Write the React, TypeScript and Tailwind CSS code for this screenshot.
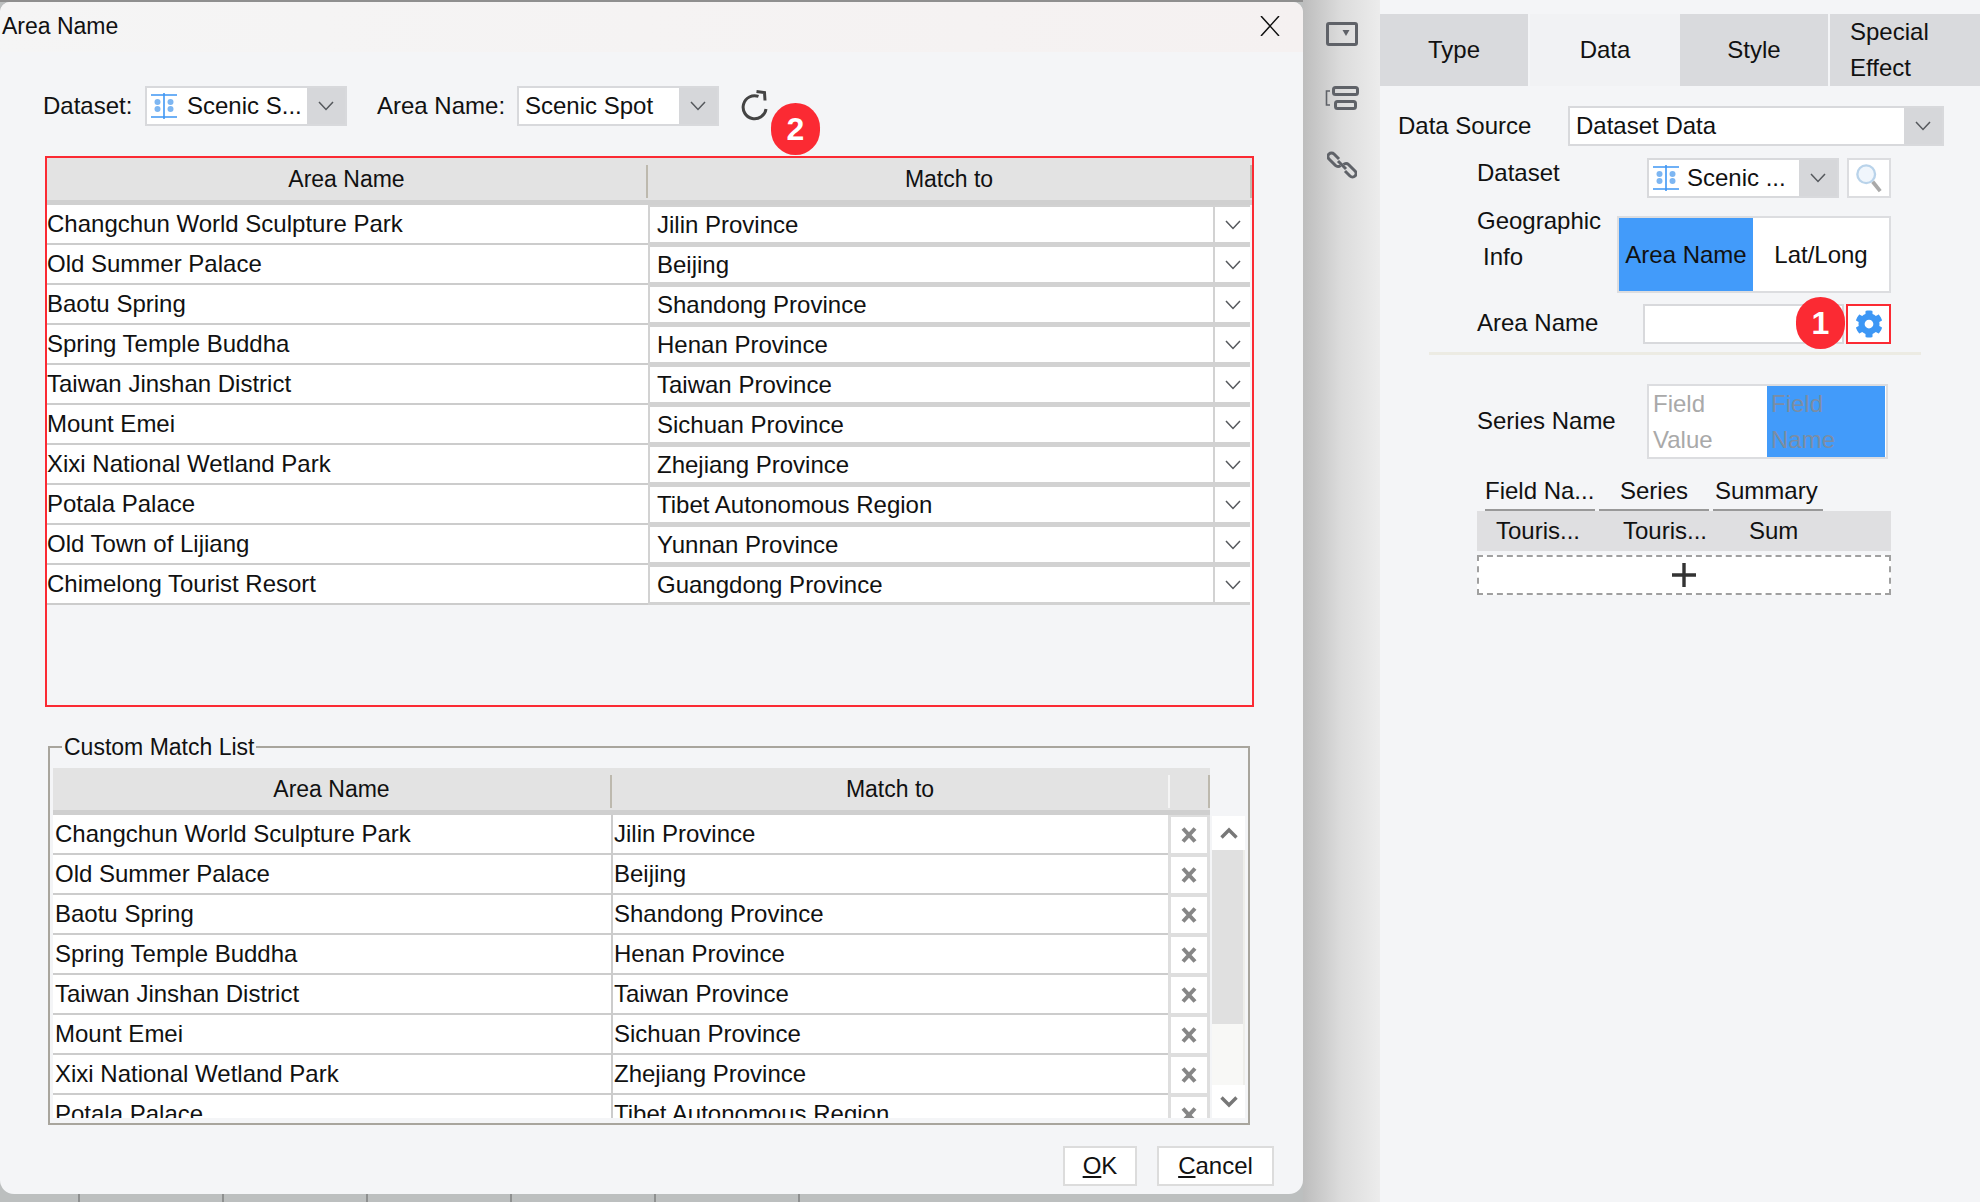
import { FaCog } from "react-icons/fa"

const autoRows = [
  ["Changchun World Sculpture Park", "Jilin Province"],
  ["Old Summer Palace", "Beijing"],
  ["Baotu Spring", "Shandong Province"],
  ["Spring Temple Buddha", "Henan Province"],
  ["Taiwan Jinshan District", "Taiwan Province"],
  ["Mount Emei", "Sichuan Province"],
  ["Xixi National Wetland Park", "Zhejiang Province"],
  ["Potala Palace", "Tibet Autonomous Region"],
  ["Old Town of Lijiang", "Yunnan Province"],
  ["Chimelong Tourist Resort", "Guangdong Province"],
]

const customRows = autoRows.slice(0, 8)

function Chevron({ className = "" }: { className?: string }) {
  return (
    <svg viewBox="0 0 16 10" className={`w-[16px] h-[10px] ${className}`} fill="none" stroke="#55585c" strokeWidth="1.5">
      <path d="M1 1l7 7.5L15 1" />
    </svg>
  )
}

function DatasetIcon() {
  return (
    <svg viewBox="0 0 26 26" className="w-[26px] h-[26px] shrink-0">
      <path d="M0 2h26M0 24h26M13 0v26" stroke="#3f97f4" strokeWidth="1.6" />
      <circle cx="6.5" cy="9" r="3" fill="#7db6f2" />
      <circle cx="6.5" cy="16" r="3" fill="#7db6f2" />
      <circle cx="19.5" cy="9" r="3" fill="#7db6f2" />
      <circle cx="19.5" cy="16" r="3" fill="#7db6f2" />
    </svg>
  )
}

function Badge({ n, className }: { n: number; className: string }) {
  return (
    <div className={`absolute w-[49px] h-[52px] rounded-full bg-[#fb2a33] text-white flex items-center justify-center text-[32px] font-bold ${className}`}>
      {n}
    </div>
  )
}

function Combo({ w, arrow = 40, h = 40, children }: { w: number; arrow?: number; h?: number; children: React.ReactNode }) {
  return (
    <div style={{ width: w, height: h }} className="flex shrink-0 bg-[#d6d7da] border-2 border-[#d8d9dc]">
      <div className="flex-1 min-w-0 bg-white flex items-center whitespace-nowrap overflow-hidden">{children}</div>
      <div style={{ width: arrow - 2 }} className="flex items-center justify-center">
        <Chevron />
      </div>
    </div>
  )
}

function XMark() {
  return (
    <svg viewBox="0 0 16 16" className="w-[16px] h-[16px]" stroke="#868686" strokeWidth="4">
      <path d="M2 1.5l12 13M14 1.5L2 14.5" />
    </svg>
  )
}

function ScrollArrow({ up }: { up?: boolean }) {
  return (
    <svg viewBox="0 0 18 12" className="w-[18px] h-[12px]" fill="none" stroke="#777777" strokeWidth="3.4">
      <path d={up ? "M1.5 10.5L9 3l7.5 7.5" : "M1.5 1.5L9 9l7.5-7.5"} />
    </svg>
  )
}

function Dialog() {
  return (
    <div className="relative h-[1192px] flex flex-col bg-[#f4f5f7] rounded-t-[10px] rounded-b-[14px] overflow-hidden">
      <div className="h-[50px] shrink-0 flex items-center justify-between bg-gradient-to-r from-[#f5f5f5] to-[#f5f1f1] pl-[2px] pr-[23px]">
        <span className="text-[23px] -mt-[2px]">Area Name</span>
        <svg viewBox="0 0 20 20" className="w-[20px] h-[20px] -mt-[3px]" stroke="#111111" strokeWidth="1.5">
          <path d="M1 0l18 20M19 0L1 20" />
        </svg>
      </div>

      <div className="h-[40px] mt-[34px] ml-[43px] flex items-center shrink-0">
        <span className="w-[102px]">Dataset:</span>
        <Combo w={202}>
          <span className="ml-[4px] mr-[10px]"><DatasetIcon /></span>
          Scenic S...
        </Combo>
        <span className="ml-[30px] w-[140px]">Area Name:</span>
        <Combo w={202}>
          <span className="ml-[6px]">Scenic Spot</span>
        </Combo>
        <svg viewBox="0 0 28 32" className="w-[28px] h-[32px] ml-[22px]" fill="none" stroke="#444444" strokeWidth="3">
          <path d="M25 19a11.5 11.5 0 1 1-7.5-12.6" />
          <path d="M15.5 1.5l8 1 .5 8" />
        </svg>
      </div>

      <div className="ml-[45px] mt-[30px] w-[1209px] h-[551px] shrink-0 border-2 border-[#fb2a33]">
        <div className="h-[47px] flex bg-[#e3e3e3] border-b-[5px] border-[#d0d0d0]">
          <div className="w-[600px] flex items-center justify-center text-[23px]">Area Name</div>
          <div className="w-[2px] h-[33px] mt-[7px] bg-[#bdb9ae]" />
          <div className="w-[603px] flex items-center justify-center text-[23px]">Match to</div>
          <div className="w-[2px] h-[33px] mt-[7px] bg-[#bdb9ae]" />
        </div>
        {autoRows.map(([area, match]) => (
          <div key={area} className="flex h-[40px] w-[1203px]">
            <div className="w-[601px] shrink-0 bg-white border-b-2 border-[#cccccc] flex items-center whitespace-nowrap">{area}</div>
            <div className="flex-1 flex bg-[#d2d2d2] pt-[2px] pb-[3px] pl-[2px]">
              <div className="w-[563px] bg-white pl-[7px] flex items-center whitespace-nowrap">{match}</div>
              <div className="w-[35px] ml-[2px] bg-white flex items-center justify-center">
                <Chevron />
              </div>
            </div>
          </div>
        ))}
      </div>

      <fieldset className="ml-[48px] mt-[26px] w-[1202px] h-[392px] shrink-0 border-2 border-[#a8a59d] pl-[3px] pr-[3px] pt-[7px]">
        <legend className="ml-[9px] px-[2px] h-[28px] leading-[28px] text-[23px]">Custom Match List</legend>
        <div className="flex">
          <div className="w-[1157px] h-[350px] overflow-hidden shrink-0">
            <div className="h-[47px] flex bg-[#e3e3e3] border-b-[5px] border-[#cfcfcf]">
              <div className="w-[557px] flex items-center justify-center text-[23px]">Area Name</div>
              <div className="w-[2px] h-[33px] mt-[7px] bg-[#bdb9ae]" />
              <div className="w-[556px] flex items-center justify-center text-[23px]">Match to</div>
              <div className="w-[2px] h-[33px] mt-[7px] bg-[#f5f5f5]" />
              <div className="w-[38px]" />
              <div className="w-[2px] h-[33px] mt-[7px] bg-[#bdb9ae]" />
            </div>
            {customRows.map(([area, match]) => (
              <div key={area} className="flex h-[40px]">
                <div className="w-[558px] shrink-0 bg-white border-b-2 border-[#cccccc] pl-[2px] flex items-center whitespace-nowrap">{area}</div>
                <div className="w-[557px] shrink-0 bg-white border-b-2 border-l-2 border-[#cccccc] pl-[1px] flex items-center whitespace-nowrap">{match}</div>
                <div className="flex-1 flex items-center justify-center bg-white border-y-[2px] border-x-[3px] border-[#dedede]">
                  <XMark />
                </div>
              </div>
            ))}
          </div>
          <div className="w-[33px] ml-[2px] mt-[48px] h-[302px] flex flex-col shrink-0">
            <div className="h-[34px] bg-white flex items-center justify-center"><ScrollArrow up /></div>
            <div className="flex-1 flex flex-col border-r-2 border-[#eeeeea]">
              <div className="h-[174px] bg-[#e0e0e0]" />
              <div className="flex-1 bg-[#f8f8f6]" />
            </div>
            <div className="h-[33px] bg-white flex items-center justify-center"><ScrollArrow /></div>
          </div>
        </div>
      </fieldset>

      <div className="flex justify-end gap-[20px] mt-[21px] mr-[29px]">
        <button className="w-[74px] h-[40px] bg-white border-2 border-[#dcdcdc]"><u>O</u>K</button>
        <button className="w-[117px] h-[40px] bg-white border-2 border-[#dcdcdc]"><u>C</u>ancel</button>
      </div>

      <Badge n={2} className="left-[771px] top-[101px]" />
    </div>
  )
}

function SideStrip() {
  return (
    <div className="w-[77px] shrink-0 h-full flex flex-col items-center pt-[22px] gap-[40px] bg-gradient-to-r from-[#bdbdbd] via-[#dcdcdc] to-[#ececec]">
      <svg viewBox="0 0 32 24" className="w-[32px] h-[24px]">
        <rect x="1.5" y="1.5" width="29" height="21" rx="1.5" fill="none" stroke="#5f6268" strokeWidth="3" />
        <path d="M16.5 8h7l-3.5 6z" fill="#5f6268" />
      </svg>
      <svg viewBox="0 0 34 24" className="w-[34px] h-[24px]" fill="none" stroke="#5f6268" strokeWidth="3">
        <rect x="8.5" y="1.5" width="24" height="7" rx="2" />
        <rect x="10.5" y="15.5" width="20" height="7" rx="2" />
        <path d="M5 5H1.5v14H5" strokeWidth="1.6" />
      </svg>
      <svg viewBox="0 0 30 30" className="w-[30px] h-[30px]" fill="none" stroke="#5f6268" strokeWidth="3">
        <path d="M12 9L7 4a3.5 3.5 0 0 0-5 5l6.5 6.5a3.5 3.5 0 0 0 5 0" />
        <path d="M18 21l5 5a3.5 3.5 0 0 0 5-5l-6.5-6.5a3.5 3.5 0 0 0-5 0" />
        <path d="M11 11l8 8" />
      </svg>
    </div>
  )
}

function Field({ label, labelClass = "", children }: { label: React.ReactNode; labelClass?: string; children: React.ReactNode }) {
  return (
    <div className="flex ml-[97px]">
      <div className={`shrink-0 ${labelClass}`}>{label}</div>
      {children}
    </div>
  )
}

function RightPanel() {
  return (
    <div className="flex-1 h-full bg-[#f4f5f7] pt-[14px] leading-[36px]">
      <div className="flex h-[72px]">
        <div className="w-[148px] bg-[#d9dadd] flex items-center justify-center">Type</div>
        <div className="w-[2px]" />
        <div className="w-[150px] bg-[#f1f2f4] flex items-center justify-center">Data</div>
        <div className="w-[148px] bg-[#d9dadd] flex items-center justify-center">Style</div>
        <div className="w-[2px]" />
        <div className="flex-1 bg-[#d9dadd] pl-[20px]">Special<br />Effect</div>
      </div>

      <div className="flex items-center ml-[18px] mt-[20px] h-[40px]">
        <span className="w-[170px]">Data Source</span>
        <Combo w={376}>
          <span className="ml-[6px]">Dataset Data</span>
        </Combo>
      </div>

      <Field label="Dataset" labelClass="w-[170px] pt-[9px]">
        <div className="flex mt-[12px] gap-[8px]">
          <Combo w={192}>
            <span className="ml-[4px] mr-[8px]"><DatasetIcon /></span>
            Scenic ...
          </Combo>
          <div className="w-[44px] h-[40px] bg-white border-2 border-[#dcdde0] flex items-center justify-center">
            <svg viewBox="0 0 30 32" className="w-[28px] h-[30px]" fill="none">
              <circle cx="12" cy="12" r="9.5" fill="#f0f6fc" stroke="#b9d3ea" strokeWidth="2.5" />
              <path d="M19 20l8 10" stroke="#a9a9a9" strokeWidth="4" />
            </svg>
          </div>
        </div>
      </Field>

      <Field label={<>Geographic<br /><span className="ml-[6px]">Info</span></>} labelClass="w-[140px] pt-[5px]">
        <div className="flex mt-[18px] w-[274px] h-[77px] border-2 border-[#dcdde0] bg-white">
          <div className="w-[134px] bg-[#429bfa] flex items-center justify-center">Area Name</div>
          <div className="flex-1 flex items-center justify-center">Lat/Long</div>
        </div>
      </Field>

      <Field label="Area Name" labelClass="w-[166px] pt-[12px]">
        <div className="relative flex mt-[11px] gap-[2px]">
          <div className="w-[201px] h-[40px] bg-white border-2 border-[#d8d9dc]" />
          <div className="w-[45px] h-[40px] bg-white border-2 border-[#fb2a33] flex items-center justify-center">
            <FaCog className="w-[28px] h-[28px] text-[#3d97f5]" />
          </div>
          <Badge n={1} className="left-[153px] -top-[7px]" />
        </div>
      </Field>

      <div className="ml-[49px] w-[492px] h-[3px] mt-[8px] bg-[#ecebe3]" />

      <Field label="Series Name" labelClass="w-[170px] pt-[48px]">
        <div className="flex mt-[29px] w-[241px] h-[75px] border-2 border-[#dcdde0] bg-white text-[#a9a9a9] pr-[1px]">
          <div className="w-[118px] pl-[4px]">Field<br />Value</div>
          <div className="flex-1 bg-[#429bfa] text-[#7c8da3] pl-[4px]">Field<br />Name</div>
        </div>
      </Field>

      <div className="ml-[105px] mt-[14px] flex gap-[4px] h-[38px]">
        <div className="w-[110px] border-b-2 border-[#999999] h-[38px] whitespace-nowrap">Field Na...</div>
        <div className="w-[110px] border-b-2 border-[#999999] h-[38px] text-center">Series</div>
        <div className="w-[110px] border-b-2 border-[#999999] h-[38px] pl-[2px]">Summary</div>
      </div>
      <div className="ml-[97px] w-[414px] h-[40px] bg-[#dfdfe1] flex items-center">
        <span className="ml-[19px] w-[127px]">Touris...</span>
        <span className="w-[126px]">Touris...</span>
        <span>Sum</span>
      </div>
      <div className="ml-[97px] w-[414px] h-[40px] mt-[4px] bg-white border-2 border-dashed border-[#a0a0a0] flex items-center justify-center">
        <svg viewBox="0 0 24 24" className="w-[24px] h-[24px]" stroke="#333333" strokeWidth="3.4">
          <path d="M0 12h24M12 0v24" />
        </svg>
      </div>
    </div>
  )
}

export default function App() {
  return (
    <div className="w-[1980px] h-[1202px] flex overflow-hidden bg-[#f4f5f7] text-[24px] leading-[30px] text-[#111111] font-['Liberation_Sans',Arial,sans-serif]">
      <div className="w-[1303px] h-full shrink-0 flex flex-col bg-[#bcbfbf]">
        <div className="h-[2px] shrink-0 bg-[#8f8f8f]" />
        <Dialog />
        <div className="flex-1 flex">
          {[80, 144, 144, 144, 144, 144].map((w, i) => (
            <div key={i} style={{ width: w }} className="h-full border-r-2 border-[#8e9090]" />
          ))}
        </div>
      </div>
      <SideStrip />
      <RightPanel />
    </div>
  )
}
